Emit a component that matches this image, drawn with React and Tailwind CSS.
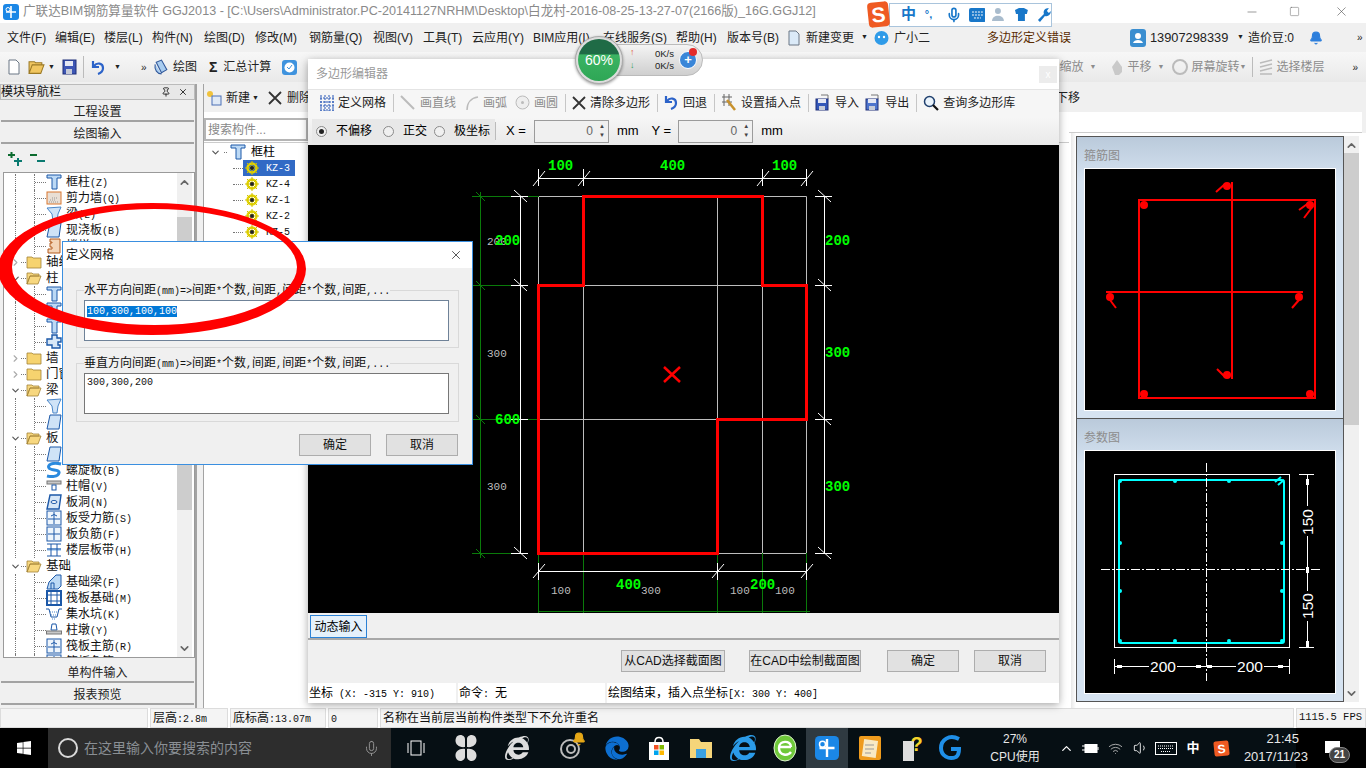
import {
  Bell,
  ChevronDown,
  ChevronRight,
  ChevronUp,
  Mic,
  Minus,
  Pin,
  Square,
  Volume1,
  Wifi,
  X,
} from "lucide-react";
import { FaEdge, FaInternetExplorer, FaWindows } from "react-icons/fa";

const MONO = "font-['Liberation_Mono',monospace]";

// ascii runs in the old SimSun style: half width, mono
function Sim({ t }) {
  return (
    <span className="whitespace-pre">
      {t.split(/([\x00-\x7f]+)/).map((part, i) =>
        /[\x00-\x7f]/.test(part) ? (
          <span key={i} className={`${MONO} text-[10px]`}>
            {part}
          </span>
        ) : (
          <span key={i}>{part}</span>
        )
      )}
    </span>
  );
}

/* ---------- icons ---------- */
const AppGlyph = ({ size = 16 }) => (
  <svg width={size} height={size} viewBox="0 0 16 16">
    <rect width="16" height="16" rx="3" fill="#1b87e6" />
    <path d="M8 2v12M3 8h10" stroke="#fff" strokeWidth="1.6" />
    <circle cx="5" cy="5.5" r="2" fill="none" stroke="#fff" />
  </svg>
);
const Column = () => (
  <svg width="16" height="16" viewBox="0 0 16 16">
    <path d="M1 1h14v3h-4v11H6V4H1z" fill="#bcd9f5" stroke="#1c58a8" />
  </svg>
);
const Wall = () => (
  <svg width="16" height="16" viewBox="0 0 16 16">
    <rect x="1" y="2" width="14" height="12" fill="#e9dfd5" stroke="#d9772e" />
    <path d="M3 12h9M4 10h6M6 8h5" stroke="#999" strokeDasharray="1 1" />
  </svg>
);
const Beam = () => (
  <svg width="16" height="16" viewBox="0 0 16 16">
    <path d="M1 2l14-1-3 7-1 7H7L6 8z" fill="#cfe3f7" stroke="#4a86c8" />
  </svg>
);
const Slab = () => (
  <svg width="16" height="16" viewBox="0 0 16 16">
    <path d="M4 1h11l-2 14H1z" fill="#cfe3f7" stroke="#1c58a8" />
  </svg>
);
const Ladder = () => (
  <svg width="16" height="16" viewBox="0 0 16 16">
    <path d="M4 1h10v14H2v-4h4V9H4V5h2V4H4z" fill="#f4d5b8" stroke="#b35a1c" />
  </svg>
);
const Cross = () => (
  <svg width="16" height="16" viewBox="0 0 16 16">
    <path d="M6 1h5v3h4v4h-3v3h2v3h-8v-3H1V5h5z" fill="#d7e7f7" stroke="#1c58a8" strokeWidth="1.4" />
  </svg>
);
const Spiral = () => (
  <svg width="16" height="16" viewBox="0 0 16 16">
    <path d="M15 2C6 0 1 3 3 6s11 1 10 5-8 4-12 3" fill="none" stroke="#2b8ade" strokeWidth="3" />
  </svg>
);
const Cap = () => (
  <svg width="16" height="16" viewBox="0 0 16 16">
    <rect x="1" y="3" width="14" height="3" fill="#c8c8c8" stroke="#777" />
    <rect x="6" y="7" width="4" height="5" fill="#fff" stroke="#1c58a8" />
  </svg>
);
const Hole = () => (
  <svg width="16" height="16" viewBox="0 0 16 16">
    <path d="M4 1h11l-2 14H1z" fill="#d7e7f7" stroke="#1c58a8" strokeWidth="1.4" />
    <ellipse cx="8" cy="8" rx="3" ry="1.5" fill="#fff" stroke="#1c58a8" />
  </svg>
);
const GridBox = ({ curve }) => (
  <svg width="16" height="16" viewBox="0 0 16 16">
    <rect x="1" y="1" width="14" height="14" fill="#eef5fc" stroke="#1c58a8" />
    <path d={curve ? "M8 2v12M2 9h12M5 6q3-3 6 0" : "M8 2v12M2 8h12"} fill="none" stroke="#1c58a8" />
  </svg>
);
const Strip = () => (
  <svg width="16" height="16" viewBox="0 0 16 16">
    <rect x="1" y="6" width="14" height="3" fill="#bcd9f5" />
    <path d="M1 2h14M1 14h14M5 2v12M11 2v12M1 7h14" stroke="#1c58a8" fill="none" />
  </svg>
);
const Foundation = () => (
  <svg width="16" height="16" viewBox="0 0 16 16">
    <path d="M1 15l2-7 7-7h5v11l-3 3zM5 15V9h3v6" fill="#bcd9f5" stroke="#1c58a8" />
  </svg>
);
const Raft = () => (
  <svg width="16" height="16" viewBox="0 0 16 16">
    <rect x="1" y="1" width="14" height="14" fill="none" stroke="#1c58a8" strokeWidth="2" />
    <path d="M1 5h14M1 11h14M5 1v14M11 1v14" stroke="#1c58a8" />
  </svg>
);
const Pit = () => (
  <svg width="16" height="16" viewBox="0 0 16 16">
    <path d="M0 3h3l2 8h6l2-8h3" fill="none" stroke="#1c58a8" />
    <path d="M4 6h8M5 9h6M6 13h4" stroke="#4a86c8" strokeDasharray="1 1" />
  </svg>
);
const Pier = () => (
  <svg width="16" height="16" viewBox="0 0 16 16">
    <path d="M6 2h4l1 6H5z" fill="#fff" stroke="#1c58a8" />
    <rect x="0.5" y="9" width="15" height="3" fill="#c8c8c8" stroke="#777" />
  </svg>
);
const Folder = ({ open }) => (
  <svg width="16" height="14" viewBox="0 0 16 14">
    {open ? (
      <path d="M1 2h5l1 1h6v2H4L1 13zM4 5h11l-3 8H1z" fill="#f7d77f" stroke="#a38437" strokeWidth="0.8" />
    ) : (
      <path d="M1 2h5l1 1h8v10H1z" fill="#f6d36f" stroke="#a38437" strokeWidth="0.8" />
    )}
  </svg>
);
const Rebar = () => (
  <svg width="14" height="14" viewBox="0 0 14 14">
    <circle cx="7" cy="7" r="4.5" fill="none" stroke="#e3d400" strokeWidth="2.4" />
    <path d="M7 0v14M0 7h14M2 2l10 10M12 2L2 12" stroke="#cfc000" strokeWidth="1" />
    <circle cx="7" cy="7" r="2" fill="#222" />
  </svg>
);
const DocIcon = ({ fill = "#fff" }) => (
  <svg width="14" height="16" viewBox="0 0 14 16">
    <path d="M2 1h7l3 3v11H2z" fill={fill} stroke="#6b7785" />
  </svg>
);
const FloppyIcon = () => (
  <svg width="15" height="16" viewBox="0 0 15 16">
    <rect x="1" y="1" width="13" height="14" fill="#3d56b5" stroke="#1f2f78" />
    <rect x="3" y="2" width="8" height="5" fill="#e4e7f3" />
    <rect x="4" y="10" width="6" height="5" fill="#c6cbd8" />
  </svg>
);
const OpenIcon = () => (
  <svg width="17" height="16" viewBox="0 0 16 14">
    <path d="M1 2h5l1 1h6v2H4L1 13zM4 5h11l-3 8H1z" fill="#f1c660" stroke="#9c7a26" />
  </svg>
);
const UndoIcon = () => (
  <svg width="15" height="15" viewBox="0 0 15 15">
    <path d="M2 1v6h6M3 6c3-4 9-3 9 2 0 3-2 5-5 6" fill="none" stroke="#2c63c9" strokeWidth="2.2" />
  </svg>
);
const BigX = ({ size = 14 }) => (
  <svg width={size} height={size} viewBox="0 0 14 14">
    <path d="M1 1l12 12M13 1L1 13" stroke="#333" strokeWidth="1.8" />
  </svg>
);
const MeshIcon = () => (
  <svg width="14" height="16" viewBox="0 0 14 16">
    <path d="M0 3h14M0 7h14M0 11h14M0 15h14M1 0v16M5 0v16M9 0v16M13 0v16" stroke="#2554b5" strokeDasharray="2 1" />
  </svg>
);
const DiskArrow = ({ up }) => (
  <svg width="16" height="17" viewBox="0 0 16 17">
    <path d="M6 1h7v4" fill="none" stroke="#777" />
    <rect x="1" y="5" width="12" height="11" fill={up ? "#3357b8" : "#4d74cc"} stroke="#1f2f78" />
    <rect x="3" y="5" width="8" height="4" fill="#e4e7f3" />
    <rect x="4" y="12" width="6" height="4" fill="#c6cbd8" />
  </svg>
);
const Lens = () => (
  <svg width="16" height="16" viewBox="0 0 16 16">
    <circle cx="6.5" cy="6.5" r="5" fill="#eaf3fb" stroke="#20406e" strokeWidth="1.5" />
    <path d="M10 10l5 5" stroke="#111" strokeWidth="2.2" />
  </svg>
);

/* ---------- top chrome ---------- */
const menus = [
  ["文件(F)", "w-[48px]"],
  ["编辑(E)", "w-[49px]"],
  ["楼层(L)", "w-[48px]"],
  ["构件(N)", "w-[52px]"],
  ["绘图(D)", "w-[51px]"],
  ["修改(M)", "w-[54px]"],
  ["钢筋量(Q)", "w-[64px]"],
  ["视图(V)", "w-[50px]"],
  ["工具(T)", "w-[49px]"],
  ["云应用(Y)", "w-[61px]"],
  ["BIM应用(I)", "w-[70px]"],
  ["在线服务(S)", "w-[73px]"],
  ["帮助(H)", "w-[51px]"],
  ["版本号(B)", "w-[60px]"],
];

function TitleBar() {
  return (
    <div className="h-[23px] bg-white flex items-center text-[12.6px] text-[#8a8a8a] whitespace-nowrap">
      <div className="w-[23px] pl-[3px] flex items-center">
        <AppGlyph />
      </div>
      <span className="w-[1222px]">
        广联达BIM钢筋算量软件 GGJ2013 - [C:\Users\Administrator.PC-20141127NRHM\Desktop\白龙村-2016-08-25-13-27-07(2166版)_16G.GGJ12]
      </span>
      <Minus size={14} strokeWidth={1} className="text-[#555]" />
      <Square size={11} strokeWidth={1} className="ml-[30px] text-[#555]" />
      <X size={15} strokeWidth={1} className="ml-[34px] text-[#555]" />
    </div>
  );
}

function MenuBar() {
  return (
    <div className="h-[29px] bg-[#f0f0f0] flex items-center pl-[7px] text-[12px] text-[#222] whitespace-nowrap">
      {menus.map(([label, w]) => (
        <span key={label} className={w}>
          {label}
        </span>
      ))}
      <span className="w-[87px] flex items-center gap-[5px]">
        <DocIcon fill="#dbeaf8" />
        新建变更
        <span className="text-[7px] ml-[2px]">▼</span>
      </span>
      <span className="w-[113px] flex items-center gap-[5px]">
        <svg width="15" height="16" viewBox="0 0 15 16">
          <circle cx="7.5" cy="8" r="7" fill="#2f9be8" />
          <circle cx="5" cy="7" r="1.2" fill="#fff" />
          <circle cx="10" cy="7" r="1.2" fill="#fff" />
        </svg>
        广小二
      </span>
      <span className="w-[143px] text-[#5b2c00]">多边形定义错误</span>
      <span className="w-[20px] flex">
        <svg width="16" height="18" viewBox="0 0 16 18">
          <rect width="16" height="18" rx="3" fill="#3a8ed0" />
          <circle cx="8" cy="7" r="3" fill="#fff" />
          <path d="M3 14c1-4 9-4 10 0z" fill="#fff" />
        </svg>
      </span>
      <span className="w-[87px] text-[12.8px]">13907298339</span>
      <span className="w-[11px] text-[7px]">▼</span>
      <span className="w-[61px]">造价豆:0</span>
      <Bell size={14} fill="#2d7fdc" className="text-[#2d7fdc]" />
      <span className="ml-[34px] text-[10px]">»</span>
    </div>
  );
}

function ToolBar() {
  return (
    <div className="h-[30px] bg-[linear-gradient(#f7f7f7,#e9e9e9)] flex items-center pl-[7px] text-[12px] text-[#222] whitespace-nowrap">
      <DocIcon />
      <span className="ml-[7px] flex items-center">
        <OpenIcon />
      </span>
      <span className="text-[7px] ml-[3px]">▼</span>
      <span className="ml-[7px] flex">
        <FloppyIcon />
      </span>
      <span className="w-px h-[22px] bg-[#bbb] ml-[6px]" />
      <span className="ml-[7px] flex">
        <UndoIcon />
      </span>
      <span className="text-[7px] ml-[8px]">▼</span>
      <span className="ml-[20px] w-[12px] text-[10px]">»</span>
      <span className="w-[56px] flex items-center gap-[3px]">
        <svg width="17" height="17" viewBox="0 0 16 16">
          <path d="M3 3l5 10 5-3-5-9zM2 5c-1 5 2 9 6 9" fill="#a9cdf0" stroke="#30579a" />
        </svg>
        绘图
      </span>
      <span className="w-[72px] flex items-center gap-[6px] font-bold text-[14px]">
        Σ<span className="font-normal text-[12px]">汇总计算</span>
      </span>
      <svg width="17" height="17" viewBox="0 0 17 17">
        <rect x="1" y="1" width="15" height="15" rx="3" fill="#3f93de" />
        <circle cx="8.5" cy="8.5" r="5" fill="#fff" />
        <path d="M6 8l2 2 3-4" stroke="#3f93de" fill="none" />
      </svg>
      <div className="ml-auto flex items-center text-[#8c8c8c] pr-[8px]">
        <span>缩放</span>
        <span className="text-[7px] ml-[6px] mr-[12px]">▼</span>
        <svg width="15" height="18" viewBox="0 0 15 18">
          <path d="M3 9l5-7 5 7v5l-3 3H6z" fill="#c9c9c9" />
        </svg>
        <span className="ml-[4px]">平移</span>
        <span className="text-[7px] ml-[6px] mr-[8px]">▼</span>
        <svg width="16" height="18" viewBox="0 0 16 18">
          <circle cx="8" cy="9" r="7" fill="none" stroke="#bbb" strokeWidth="2" />
        </svg>
        <span className="ml-[3px]">屏幕旋转</span>
        <span className="text-[7px] mr-[6px]">▼</span>
        <span className="w-px h-[20px] bg-[#bbb] mr-[6px]" />
        <svg width="14" height="16" viewBox="0 0 14 16">
          <path d="M1 4l12-3M1 8l12-3M1 12l12-3M1 15h12" stroke="#bbb" strokeWidth="1.5" />
        </svg>
        <span className="ml-[3px]">选择楼层</span>
        <span className="ml-[28px] text-[10px] text-[#222]">»</span>
      </div>
    </div>
  );
}

/* ---------- left navigation ---------- */
const treeRows = [
  ["框柱(Z)", Column],
  ["剪力墙(Q)", Wall],
  ["梁(L)", Beam],
  ["现浇板(B)", Slab],
  ["楼梯(L)", Ladder],
  { folder: "轴线" },
  { folder: "柱", open: true },
  ["框柱(Z)", Column],
  ["暗柱(Z)", Column],
  ["端柱(Z)", Column],
  ["构造柱(Z)", Cross],
  { folder: "墙" },
  { folder: "门窗洞" },
  { folder: "梁", open: true },
  ["梁(L)", Beam],
  ["连梁(G)", Slab],
  { folder: "板", open: true },
  ["现浇板(B)", Slab],
  ["螺旋板(B)", Spiral],
  ["柱帽(V)", Cap],
  ["板洞(N)", Hole],
  ["板受力筋(S)", () => <GridBox curve />],
  ["板负筋(F)", () => <GridBox />],
  ["楼层板带(H)", Strip],
  { folder: "基础", open: true },
  ["基础梁(F)", Foundation],
  ["筏板基础(M)", Raft],
  ["集水坑(K)", Pit],
  ["柱墩(Y)", Pier],
  ["筏板主筋(R)", () => <GridBox curve />],
  ["筏板负筋(X)", () => <GridBox />],
];

function TreeRow({ row }) {
  if (row.folder) {
    return (
      <div className="h-4 flex items-center text-[12.5px] text-[#111] whitespace-nowrap">
        <span className="w-[6px]" />
        {row.open ? (
          <ChevronDown size={11} strokeWidth={2.5} className="text-[#555]" />
        ) : (
          <ChevronRight size={11} strokeWidth={2.5} className="text-[#aaa]" />
        )}
        <span className="w-[5px] border-t border-dotted border-[#777]" />
        <Folder open={row.open} />
        <span className="ml-[4px]">{row.folder}</span>
      </div>
    );
  }
  const [label, Icon] = row;
  return (
    <div className="h-4 flex items-center text-[12px] text-[#111] whitespace-nowrap">
      <span className="w-[11px]" />
      <span className="w-[19px] h-full border-l border-dotted border-[#777]" />
      <span className="w-[12px] h-full border-l border-dotted border-[#777] flex items-center">
        <span className="w-full border-t border-dotted border-[#777]" />
      </span>
      <span className="flex">
        <Icon />
      </span>
      <span className="ml-[4px]">
        <Sim t={label} />
      </span>
    </div>
  );
}

const NavBtn = ({ label, className }) => (
  <div
    className={`mx-px flex items-center justify-center pt-[3px] text-[12px] text-[#222] bg-[#f0f0f0] border-b-2 border-[#a3a3a3] ${className}`}
  >
    {label}
  </div>
);

function LeftNav() {
  return (
    <div className="w-[197px] shrink-0 flex flex-col bg-[#f0f0f0] border-r-2 border-[#a3a3a3]">
      <div className="h-[16px] flex items-center justify-between pr-[6px] bg-[#e8e8e8] border border-[#bbb] text-[12px] text-[#111]">
        模块导航栏
        <span className="flex items-center gap-[7px]">
          <Pin size={10} />
          <X size={10} />
        </span>
      </div>
      <NavBtn label="工程设置" className="h-[22px]" />
      <NavBtn label="绘图输入" className="h-[22px]" />
      <div className="h-[28px] pl-[7px] flex items-center gap-[7px]">
        <svg width="16" height="15" viewBox="0 0 16 15">
          <path d="M1 4h7M4.500 1v6" stroke="#0c6b2f" strokeWidth="2" />
          <path d="M7 10h8M11 7v8" stroke="#0a7a70" strokeWidth="2" />
        </svg>
        <svg width="16" height="15" viewBox="0 0 16 15">
          <path d="M0 4h7" stroke="#0c6b2f" strokeWidth="2" />
          <path d="M7 10h8" stroke="#0a7a70" strokeWidth="2" />
        </svg>
      </div>
      <div className="ml-[3px] h-[486px] border border-[#9a9a9a] bg-white flex overflow-hidden">
        <div className="flex-1 pt-px overflow-hidden">
          {treeRows.map((row, i) => (
            <TreeRow key={i} row={row} />
          ))}
        </div>
        <div className="w-[15px] mr-[2px] flex flex-col items-center bg-[#f0f0f0]">
          <ChevronUp size={13} strokeWidth={3} className="mt-[3px] mb-[28px] text-[#666]" />
          <div className="w-full h-[293px] bg-[#cdcdcd]" />
          <ChevronDown size={13} strokeWidth={3} className="mt-auto mb-[2px] text-[#666]" />
        </div>
      </div>
      <div className="h-[3px]" />
      <NavBtn label="单构件输入" className="h-[22px]" />
      <NavBtn label="报表预览" className="h-[22px]" />
    </div>
  );
}

/* ---------- middle / right ---------- */
function MiddleColumn() {
  const kz = ["KZ-3", "KZ-4", "KZ-1", "KZ-2", "KZ-5"];
  return (
    <div className="flex-1 flex flex-col min-w-0 border-l border-[#a3a3a3]">
      <div className="h-[28px] shrink-0 flex items-center pl-[2px] bg-[#f0f0f0] text-[12px] text-[#222] whitespace-nowrap">
        <svg width="16" height="16" viewBox="0 0 16 16">
          <circle cx="4" cy="4" r="3" fill="#f0c23c" />
          <rect x="6" y="6" width="9" height="9" fill="#dfe9f6" stroke="#4a6fb5" />
        </svg>
        <span className="ml-[4px]">新建</span>
        <span className="text-[7px] ml-[2px] mr-[9px]">▼</span>
        <BigX />
        <span className="ml-[5px]">删除</span>
        <span className="ml-auto mr-[286px]">下移</span>
      </div>
      <div className="flex-1 flex min-h-0">
        <div className="w-[865px] flex flex-col bg-white">
          <div className="h-[30px] shrink-0 pt-[6px] pb-px">
            <div className="w-[104px] h-full border-2 border-[#b5b5b5] pl-[2px] flex items-center text-[12px] text-[#888]">
              搜索构件...
            </div>
          </div>
          <div className="flex-1 border-t border-[#ccc] pt-px text-[12px]">
            <div className="h-4 flex items-center pl-[6px] gap-[3px]">
              <ChevronDown size={11} strokeWidth={2.5} className="text-[#555]" />
              <span className="w-[3px] border-t border-dotted border-[#777]" />
              <Column />
              <span className="ml-[2px]">框柱</span>
            </div>
            {kz.map((k, i) => (
              <div key={k} className="h-4 flex items-center pl-[29px] whitespace-nowrap">
                <span className="w-[10px] border-t border-dotted border-[#777]" />
                <span className={`h-4 w-[52px] flex items-center gap-[7px] pl-[2px] ${i === 0 ? "bg-[#316ac5] text-white" : "text-[#111]"}`}>
                  <Rebar />
                  <span className={`${MONO} text-[10px]`}>{k}</span>
                </span>
              </div>
            ))}
          </div>
        </div>
        <div className="flex-1 flex flex-col">
          <div className="h-[21px] shrink-0 bg-white border-b border-[#ccc] mr-[4px]" />
          <div className="flex-1 flex bg-[linear-gradient(90deg,#fff,#fff_2px,#e8e8e8_2px,#fff_7px)] pl-[7px] pt-[3px] pb-[6px]">
            <div className="w-[268px] flex flex-col border border-[#555]">
              <DrawPanel title="箍筋图" className="h-[282px] border-b border-[#555]">
                <StirrupDrawing />
              </DrawPanel>
              <DrawPanel title="参数图" className="h-[282px]">
                <ParamDrawing />
              </DrawPanel>
            </div>
            <div className="w-[15px] bg-[#f0f0f0] flex flex-col items-center">
              <ChevronUp size={13} strokeWidth={3} className="mt-[3px] mb-[1px] text-[#666]" />
              <div className="w-full h-[272px] bg-[#cdcdcd]" />
              <ChevronDown size={13} strokeWidth={3} className="mt-auto mb-[2px] text-[#666]" />
            </div>
            <div className="w-[7px] bg-white" />
          </div>
        </div>
      </div>
    </div>
  );
}

const DrawPanel = ({ title, className, children }) => (
  <div className={`flex flex-col px-[7px] pb-[7px] bg-[linear-gradient(#bacadb,#d6e3f1_16%,#d6e3f1)] ${className}`}>
    <div className="h-[31px] shrink-0 flex items-center pt-[6px] text-[12px] text-[#8d8d8d]">{title}</div>
    <div className="flex-1 border border-white bg-black overflow-hidden">{children}</div>
  </div>
);

function StirrupDrawing() {
  const dots = [[59,36],[225,36],[59,225],[225,225],[25,128],[214,128],[142,17],[142,206]];
  return (
    <svg width="252" height="242" viewBox="0 0 252 242" fill="none" stroke="#f00" strokeWidth="2">
      <rect x="54" y="31" width="176" height="198" />
      <path d="M147 13v197M21 123h197" />
      <path d="M140 15l-9 8M140 208l-8-8M25 131l6 8M214 131l-7 8M225 33l-11 8M228 37l-9 12" />
      {dots.map(([x, y]) => (
        <circle key={`${x}-${y}`} cx={x} cy={y} r="4" fill="#f00" stroke="none" />
      ))}
    </svg>
  );
}

function ParamDrawing() {
  const bumps = [[90,30],[144,30],[90,190],[144,190],[35,92],[35,140],[197,92],[197,140],[35,30],[35,190],[197,190]];
  const textCls = "font-['Liberation_Sans',sans-serif] text-[15.5px]";
  return (
    <svg width="252" height="242" viewBox="0 0 252 242" fill="none" stroke="#fff">
      <rect x="29.500" y="23.500" width="175" height="173" />
      <rect x="34" y="29" width="165" height="163" rx="2" stroke="#0ff" strokeWidth="2" />
      <path d="M121.500 12v218M16 118.500h219" strokeDasharray="9 2 2 2" />
      <path d="M193 34l6-5M190 31l6-5" stroke="#0ff" strokeWidth="2" />
      {bumps.map(([x, y]) => (
        <circle key={`${x}-${y}`} cx={x} cy={y} r="2" fill="#0ff" stroke="none" />
      ))}
      <path d="M222.500 24v173M214 23.500h15M214 196.500h15M29.500 208v15M204.500 208v15M29 215.500h175" />
      <path d="M222.500 34v-6M222.500 122v-6M222.500 196v-6M37 215.500h-5M116 215.500h-5M127 215.500h-5M198 215.500h-5" strokeWidth="3" />
      <rect x="215" y="55" width="15" height="30" fill="#000" stroke="none" />
      <rect x="215" y="140" width="15" height="30" fill="#000" stroke="none" />
      <rect x="64" y="208" width="28" height="15" fill="#000" stroke="none" />
      <rect x="151" y="208" width="28" height="15" fill="#000" stroke="none" />
      <g fill="#fff" stroke="none" className={textCls} textAnchor="middle">
        <text x="78" y="221">200</text>
        <text x="165" y="221">200</text>
        <text transform="translate(228 71) rotate(-90)">150</text>
        <text transform="translate(228 155) rotate(-90)">150</text>
      </g>
    </svg>
  );
}

function CanvasDrawing() {
  const gridX = [230.5, 275.5, 409.5, 454.5, 498.5];
  const gridY = [51.5, 140.5, 274.5, 408.5];
  const greens = [
    [240, 25, "100"], [352, 25, "400"], [464, 25, "100"],
    [187, 100, "200"], [187, 279, "600"],
    [517, 100, "200"], [517, 212, "300"], [517, 346, "300"],
    [308, 444, "400"], [442, 444, "200"],
  ];
  const grays = [
    [179, 100, "200"], [179, 212, "300"], [179, 345, "300"],
    [243, 449, "100"], [333, 449, "300"], [422, 449, "100"], [467, 449, "100"],
  ];
  return (
    <svg width="751" height="468" viewBox="0 0 751 468" fill="none">
      {gridX.map((x) => (
        <path key={x} d={`M${x} 51.500V408.500`} stroke="#bdbdbd" />
      ))}
      {gridY.map((y) => (
        <path key={y} d={`M230.500 ${y}H498.500`} stroke="#bdbdbd" />
      ))}
      {/* green dimension lines */}
      <g stroke="#0a7a0a">
        <path d="M172.500 47v366M164 51.500h67M165 140.500h38M165 274.500h66M164 408.500h41" />
        <path d="M168 47l9 9M168 136l9 9M168 270l9 9M168 404l9 9" />
        <path d="M230.500 408v60M275.500 408v60M409.500 408v60M454.500 408v60M498.500 408v60M230 466.500h272" />
      </g>
      {/* white dimension lines */}
      <g stroke="#fff">
        <path d="M230.500 33.500h268M230.500 24v17M275.500 24v17M454.500 24v17M498.500 24v17" />
        <path d="M225 41l12-15M270 41l12-15M449 41l12-15M493 41l12-15" />
        <path d="M212.500 51v358M203 51.500h17M203 140.500h17M203 274.500h17M203 408.500h17" />
        <path d="M206 45l13 12M206 134l13 12M206 402l13 12" />
        <path d="M516.500 51v358M507 51.500h17M507 140.500h17M507 274.500h17M507 408.500h17" />
        <path d="M510 45l13 12M510 134l13 12M510 268l13 12M510 402l13 12" />
        <path d="M230.500 426.500h268M230.500 418v17M409.500 418v17M498.500 418v17" />
        <path d="M225 433l12-14M404 433l12-14M493 433l12-14" />
      </g>
      <path d="M275.500 51.500H454.500V140.500H498.500V274.500H409.500V408.500H230.500V140.500H275.500Z" stroke="#f00" strokeWidth="3" />
      <path d="M356 222l16 15M372 222l-16 15" stroke="#f00" strokeWidth="2.500" />
      <g className={`${MONO} text-[11px]`} fill="#bdbdbd">
        {grays.map(([x, y, t]) => (
          <text key={`${x}-${y}`} x={x} y={y}>{t}</text>
        ))}
      </g>
      <g className={`${MONO} text-[14px] font-bold`} fill="#0f0">
        {greens.map(([x, y, t]) => (
          <text key={`${x}-${y}`} x={x} y={y}>{t}</text>
        ))}
      </g>
    </svg>
  );
}

/* ---------- floating windows ---------- */
const EdTool = ({ icon, label, className, muted }) => (
  <span className={`flex items-center gap-[4px] ${muted ? "text-[#8c8c8c]" : "text-[#222]"} ${className}`}>
    {icon}
    {label}
  </span>
);
const Sep = () => <span className="w-px h-[18px] bg-[#c6c6c6] ml-[1px] mr-[6px]" />;

const Radio = ({ on, className }) => (
  <span className={`w-[11px] h-[11px] rounded-full border border-[#8a8a8a] bg-[#f0f0f0] flex items-center justify-center ${className}`}>
    {on && <span className="w-[5px] h-[5px] rounded-full bg-[#222]" />}
  </span>
);

const SpinBox = () => (
  <span className="w-[75px] h-[23px] border border-[#9b9b9b] bg-[#f0f0f0] flex items-center justify-end pr-[3px] text-[#666]">
    0
    <span className="ml-[6px] flex flex-col text-[6px] leading-[9px] text-[#444]">
      <span>▲</span>
      <span>▼</span>
    </span>
  </span>
);

const WinBtn = ({ label, className }) => (
  <span className={`h-[22px] bg-[#e1e1e1] border border-[#adadad] flex items-center justify-center text-[12px] text-[#111] ${className}`}>
    {label}
  </span>
);

function PolygonEditor() {
  return (
    <div className="absolute left-[308px] top-[59px] w-[751px] h-[644px] flex flex-col bg-[#f0f0f0] shadow-[0_2px_8px_rgba(0,0,0,0.35)] text-[12px] whitespace-nowrap">
      <div className="h-[30px] bg-white flex items-center justify-between pl-[8px] pr-[2px] text-[#999]">
        多边形编辑器
        <span className="w-[18px] h-[17px] bg-[#ececec] text-white text-[10px] flex items-center justify-center">x</span>
      </div>
      <div className="h-[28px] bg-[#f6f6f6] border-t border-[#e4e4e4] flex items-center pl-[12px] pb-[2px]">
        <EdTool icon={<MeshIcon />} label="定义网格" className="mr-[6px]" />
        <Sep />
        <EdTool
          muted
          icon={
            <svg width="16" height="16" viewBox="0 0 16 16">
              <path d="M1 1l13 13" stroke="#bbb" strokeWidth="2" />
            </svg>
          }
          label="画直线"
          className="mr-[9px]"
        />
        <EdTool
          muted
          icon={
            <svg width="14" height="16" viewBox="0 0 14 16">
              <path d="M2 15C2 8 6 3 13 2" stroke="#bbb" strokeWidth="1.5" fill="none" />
            </svg>
          }
          label="画弧"
          className="mr-[8px]"
        />
        <EdTool
          muted
          icon={
            <svg width="15" height="15" viewBox="0 0 15 15">
              <circle cx="7.500" cy="7.500" r="6.500" fill="#eee" stroke="#bbb" />
              <circle cx="7.500" cy="7.500" r="1.500" fill="#bbb" />
            </svg>
          }
          label="画圆"
          className="mr-[6px]"
        />
        <Sep />
        <EdTool icon={<BigX />} label="清除多边形" className="mr-[6px]" />
        <Sep />
        <EdTool icon={<UndoIcon />} label="回退" className="mr-[6px]" />
        <Sep />
        <EdTool
          icon={
            <svg width="16" height="17" viewBox="0 0 16 17">
              <path d="M1 3h10M1 8h10M3 0v12M8 0v12" stroke="#666" />
              <path d="M6 6l8 10" stroke="#c8912c" strokeWidth="2.500" />
            </svg>
          }
          label="设置插入点"
          className="mr-[6px]"
        />
        <Sep />
        <EdTool icon={<DiskArrow up />} label="导入" className="mr-[6px]" />
        <EdTool icon={<DiskArrow />} label="导出" className="mr-[6px]" />
        <Sep />
        <EdTool icon={<Lens />} label="查询多边形库" />
      </div>
      <div className="h-[28px] bg-[linear-gradient(#f6f6f6,#e9e9e9)] flex items-center">
        <div className="w-[183px] ml-[4px] h-[24px] bg-[#e8e8e8] flex items-center pl-[4px]">
          <Radio on />
          <span className="ml-[9px]">不偏移</span>
          <Radio className="ml-[11px]" />
          <span className="ml-[9px]">正交</span>
          <Radio className="ml-[7px]" />
          <span className="ml-[9px]">极坐标</span>
        </div>
        <span className="w-px h-[18px] bg-[#bbb] mr-[2px]" />
        <span className="ml-[8px] mr-[8px] text-[13px] font-['Liberation_Sans',sans-serif]">X =</span>
        <SpinBox />
        <span className="ml-[8px] mr-[13px] text-[13px] font-['Liberation_Sans',sans-serif]">mm</span>
        <span className="mr-[7px] text-[13px] font-['Liberation_Sans',sans-serif]">Y =</span>
        <SpinBox />
        <span className="ml-[8px] text-[13px] font-['Liberation_Sans',sans-serif]">mm</span>
      </div>
      <div className="h-[468px] bg-black overflow-hidden">
        <CanvasDrawing />
      </div>
      <div className="h-[27px] border-b-2 border-[#a8a8a8] flex items-start pt-[2px] pl-[2px]">
        <span className="w-[57px] h-[23px] border border-[#2b82d6] bg-[#e5f1fb] flex items-center justify-center">动态输入</span>
      </div>
      <div className="h-[43px] flex items-center pb-[2px]">
        <WinBtn label="从CAD选择截面图" className="ml-[313px] w-[104px]" />
        <WinBtn label="在CAD中绘制截面图" className="ml-[24px] w-[112px]" />
        <WinBtn label="确定" className="ml-[26px] w-[72px]" />
        <WinBtn label="取消" className="ml-[15px] w-[72px]" />
      </div>
      <div className="h-[20px] flex gap-[2px]">
        <span className="w-[148px] bg-white pl-[1px] flex items-center"><Sim t="坐标 (X: -315 Y: 910)" /></span>
        <span className="w-[147px] bg-white pl-[1px] flex items-center"><Sim t="命令: 无" /></span>
        <span className="flex-1 bg-white pl-[1px] flex items-center"><Sim t="绘图结束，插入点坐标[X: 300 Y: 400]" /></span>
      </div>
    </div>
  );
}

function GridDialog() {
  return (
    <div className="absolute left-[62px] top-[241px] w-[411px] h-[224px] border border-[#3a8fe0] bg-[#f0f0f0] text-[12px] text-[#111] whitespace-nowrap">
      <div className="h-[26px] bg-white flex items-center justify-between pl-[3px] pr-[9px]">
        定义网格
        <X size={14} strokeWidth={1.2} />
      </div>
      <fieldset className="mt-[14px] ml-[13px] w-[383px] border border-[#d9d9d9] pl-[7px] pb-[6px]">
        <legend className="h-[16px] leading-[16px]">
          <Sim t="水平方向间距(mm)=>间距*个数,间距,间距*个数,间距,..." />
        </legend>
        <div className="w-[365px] h-[41px] mt-[2px] border border-[#6f8298] bg-white pl-[2px] pt-[2px] leading-[14px]">
          <span className={`${MONO} text-[10px] bg-[#0078d7] text-white`}>100,300,100,100</span>
        </div>
      </fieldset>
      <fieldset className="mt-[7px] ml-[13px] w-[383px] border border-[#d9d9d9] pl-[7px] pb-[7px]">
        <legend className="h-[16px] leading-[16px]">
          <Sim t="垂直方向间距(mm)=>间距*个数,间距,间距*个数,间距,..." />
        </legend>
        <div className={`w-[365px] h-[41px] mt-[2px] border border-[#777] bg-white pl-[2px] pt-[2px] leading-[14px] ${MONO} text-[10px]`}>
          300,300,200
        </div>
      </fieldset>
      <div className="mt-[12px] flex">
        <WinBtn label="确定" className="ml-[236px] w-[72px]" />
        <WinBtn label="取消" className="ml-[15px] w-[72px]" />
      </div>
    </div>
  );
}

function NetWidget() {
  return (
    <div className="absolute left-[575px] top-[36px] w-[128px] h-[48px]">
      <div className="absolute left-[20px] top-[8px] w-[108px] h-[32px] rounded-r-full bg-[linear-gradient(#f4f4f4,#cfcfcf)] border border-[#bbb] text-[9.5px] text-[#222]">
        <div className="h-1/2 flex items-center pl-[59px] pt-[3px] font-['Liberation_Sans',sans-serif]">0K/s</div>
        <div className="h-1/2 flex items-center pl-[59px] pb-[3px] font-['Liberation_Sans',sans-serif]">0K/s</div>
        <span className="absolute left-[34px] top-[1px] text-[9px] text-[#e0633c]">↑</span>
        <span className="absolute left-[34px] top-[14px] text-[9px] text-[#2f9e55]">↓</span>
        <span className="absolute left-[83px] top-[6px] w-[18px] h-[18px] rounded-full bg-[#3a86d8] border border-white text-white text-[13px] leading-[15px] text-center font-bold">+</span>
        <span className="absolute left-[93px] top-[3px] w-[8px] h-[8px] rounded-full bg-[#e22b2b]" />
      </div>
      <div className="absolute left-0 top-0 w-[48px] h-[48px] rounded-full bg-[#ddd] border border-[#aaa] flex items-center justify-center shadow-[0_1px_3px_rgba(0,0,0,0.4)]">
        <div className="w-[42px] h-[42px] rounded-full bg-[linear-gradient(#1f6b46_0%,#1f6b46_35%,#3bb463_38%,#2ea655_100%)] flex items-center justify-center text-white text-[14px] font-['Liberation_Sans',sans-serif]">
          60%
        </div>
      </div>
    </div>
  );
}

function ImeBar() {
  return (
    <div className="absolute left-[868px] top-[2px] flex items-center">
      <div className="w-[21px] h-[25px] bg-[#ef5a22] rounded-[4px] -rotate-6 flex items-center justify-center text-white text-[21px] font-bold font-['Liberation_Sans',sans-serif] z-10">
        S
      </div>
      <div className="w-[163px] h-[24px] bg-white border border-[#a9c4dc] flex items-center pl-[11px] gap-[7px] text-[#1877c9]">
        <span className="text-[15px] font-bold w-[16px]">中</span>
        <span className="text-[11px] font-bold w-[14px] ml-[1px]">°,</span>
        <Mic size={16} strokeWidth={2.5} />
        <svg width="17" height="14" viewBox="0 0 17 14">
          <rect width="17" height="14" rx="2" fill="#1877c9" />
          <path d="M3 4h11M3 7h11M5 10h7" stroke="#fff" strokeDasharray="2 1" />
        </svg>
        <svg width="15" height="16" viewBox="0 0 15 16">
          <circle cx="6" cy="4" r="3" fill="#a9bccd" />
          <path d="M0 14c0-7 12-7 12 0z" fill="#a9bccd" />
        </svg>
        <svg width="15" height="15" viewBox="0 0 15 15">
          <path d="M1 3l4-2h5l4 2-1 4h-2v7H4V7H2z" fill="#1877c9" />
        </svg>
        <svg width="15" height="15" viewBox="0 0 15 15">
          <path d="M2 13l6-6c-1-3 1-6 5-6l-2 3 2 2 2-2c0 4-3 6-6 5l-5 6z" fill="#1877c9" />
        </svg>
      </div>
    </div>
  );
}

function RedEllipse() {
  return (
    <svg className="absolute left-0 top-[195px] pointer-events-none" width="320" height="150" viewBox="0 0 320 150">
      <path
        fillRule="evenodd"
        fill="#f00"
        d="M-2 74a154 66 0 1 0 308 0a154 66 0 1 0 -308 0ZM12 72a142.500 58 0 1 0 285 0a142.500 58 0 1 0 -285 0Z"
      />
    </svg>
  );
}

/* ---------- bottom ---------- */
function StatusBar() {
  const cell = "bg-[#f4f4f4] border border-[#dcdcdc] flex items-center pl-[2px]";
  return (
    <div className="h-[20px] flex gap-[2px] bg-white text-[12px] text-[#111] whitespace-nowrap">
      <span className={`${cell} w-[148px]`} />
      <span className={`${cell} w-[78px]`}><Sim t="层高:2.8m" /></span>
      <span className={`${cell} w-[96px]`}><Sim t="底标高:13.07m" /></span>
      <span className={`${cell} w-[50px]`}><Sim t="0" /></span>
      <span className={`${cell} w-[914px]`}>名称在当前层当前构件类型下不允许重名</span>
      <span className={`${cell} flex-1 pl-[1px] ${MONO} text-[10.5px]`}>1115.5 FPS</span>
    </div>
  );
}

const taskIcons = [
  ["w-[50px]", <svg key="t" width="18" height="16" viewBox="0 0 18 16" fill="none" stroke="#fff"><rect x="4" y="1" width="10" height="14" /><path d="M1 3v10M17 3v10" /></svg>],
  ["w-[50px]", <svg key="f" width="26" height="28" viewBox="0 0 26 28" fill="#ddd"><path d="M12 13C5 14 1 9 3 4s9-3 9 1zM14 13c7 1 11-4 9-9s-9-3-9 1zM12 15c-7-1-11 4-9 9s9 3 9-1zM14 15c7-1 11 4 9 9s-9 3-9-1z" /></svg>],
  ["w-[52px]", <FaInternetExplorer key="e" size={24} className="text-[#ddd]" />],
  ["w-[53px]", <span key="s" className="relative flex"><svg width="24" height="26" viewBox="0 0 24 26" fill="none" stroke="#bbb" strokeWidth="2"><circle cx="12" cy="14" r="9" /><circle cx="13" cy="14" r="4" /></svg><Bell size={14} fill="#e6a817" className="absolute -top-[3px] left-[14px] text-[#e6a817]" /></span>],
  ["w-[42px]", <FaEdge key="ed" size={24} className="text-[#0d6fd1]" />],
  ["w-[42px]", <svg key="st" width="24" height="26" viewBox="0 0 24 26"><path d="M2 7h20v18H2z" fill="#fff" /><path d="M8 7c0-6 8-6 8 0" fill="none" stroke="#fff" strokeWidth="1.5" /><rect x="7" y="10" width="4.500" height="4.500" fill="#f25022" /><rect x="12.500" y="10" width="4.500" height="4.500" fill="#7fba00" /><rect x="7" y="15.500" width="4.500" height="4.500" fill="#00a4ef" /><rect x="12.500" y="15.500" width="4.500" height="4.500" fill="#ffb900" /></svg>],
  ["w-[42px]", <svg key="fo" width="24" height="24" viewBox="0 0 24 24"><path d="M1 3h9l2 3h11v16H1z" fill="#f5d57a" /><rect x="7" y="13" width="10" height="9" fill="#3aa0e0" /></svg>],
  ["w-[42px]", <FaInternetExplorer key="ie" size={26} className="text-[#2b9be8]" />],
  ["w-[42px]", <svg key="g" width="24" height="28" viewBox="0 0 24 28"><ellipse cx="12" cy="14" rx="11" ry="13" fill="#6fc83a" stroke="#dff3d0" /><path d="M6 13h12M18 13c0-7-12-7-12 1s9 8 12 4" fill="none" stroke="#fff" strokeWidth="2.400" /></svg>],
  ["w-[42px] bg-[#2f3a41]", <AppGlyph key="a" size={24} />],
  ["w-[44px]", <svg key="y" width="24" height="26" viewBox="0 0 24 26"><rect x="1" y="1" width="22" height="24" rx="2" fill="#ef9b1d" /><rect x="5" y="5" width="14" height="17" fill="#f8e9c5" transform="rotate(8 12 13)" /><path d="M7 10h9M7 14h9M7 18h6" stroke="#999" /></svg>],
  ["w-[32px]", <span key="h" className="relative flex"><span className="w-[11px] h-[20px] mt-[6px] bg-[#ddd]" /><span className="absolute left-[8px] -top-[2px] text-[#f5d32a] text-[20px] font-bold leading-[22px] font-['Liberation_Sans',sans-serif]">?</span></span>],
  ["w-[52px]", <svg key="gg" width="24" height="28" viewBox="0 0 24 28" fill="none" stroke="#1f8fe8" strokeWidth="4"><path d="M21 5C11 0 3 6 3 14s8 12 15 9c3-2 3-6 3-8h-8" /></svg>],
];

function TaskBar() {
  return (
    <div className="h-[40px] bg-[#060f14] flex items-stretch text-white whitespace-nowrap">
      <div className="w-[48px] bg-black flex items-center justify-center">
        <FaWindows size={16} />
      </div>
      <div className="w-[343px] bg-[#2d2d2d] flex items-center pl-[10px] text-[14px] text-[#8a8f94]">
        <span className="w-[20px] h-[20px] rounded-full border-[2.5px] border-[#d9d9d9] mr-[6px]" />
        在这里输入你要搜索的内容
        <Mic size={17} strokeWidth={1.3} className="ml-auto mr-[11px] text-[#999]" />
      </div>
      {taskIcons.map(([w, node], i) => (
        <div key={i} className={`${w} flex items-center justify-center`}>
          {node}
        </div>
      ))}
      <div className="w-[78px] flex flex-col items-center justify-center text-[12px] leading-[18px] text-[#e8e8e8]">
        <span>27%</span>
        <span>CPU使用</span>
      </div>
      <div className="w-[24px] flex items-center justify-center">
        <ChevronUp size={15} />
      </div>
      <div className="w-[25px] flex items-center justify-center">
        <svg width="17" height="11" viewBox="0 0 17 11">
          <rect x="3" y="1.500" width="12" height="8" fill="#fff" stroke="#fff" />
          <path d="M0 3h3M0 7h3M16 4v3" stroke="#fff" />
        </svg>
      </div>
      <div className="w-[25px] flex items-center justify-center">
        <Wifi size={15} strokeWidth={1.4} className="text-[#bbb]" />
      </div>
      <div className="w-[25px] flex items-center justify-center">
        <Volume1 size={16} strokeWidth={1.3} />
      </div>
      <div className="w-[26px] flex items-center justify-center">
        <svg width="22" height="13" viewBox="0 0 22 13" fill="none" stroke="#fff">
          <rect x="0.500" y="0.500" width="21" height="12" />
          <path d="M3 4h16M3 6.500h16M6 9.500h10" strokeDasharray="1 1" />
        </svg>
      </div>
      <div className="w-[28px] flex items-center justify-center text-[13px] font-bold">中</div>
      <div className="w-[28px] flex items-center justify-center">
        <span className="w-[15px] h-[15px] bg-[#ef5a22] rounded-[2px] -rotate-6 flex items-center justify-center text-[12px] font-bold font-['Liberation_Sans',sans-serif]">S</span>
      </div>
      <div className="w-[80px] flex flex-col items-end justify-center text-[13px] leading-[18px] text-[#e8e8e8] bg-[linear-gradient(90deg,#060f14_76%,#000_76%)] font-['Liberation_Sans',sans-serif] pr-[7px]">
        <span className="pr-[9px]">21:45</span>
        <span>2017/11/23</span>
      </div>
      <div className="flex-1 bg-black relative flex items-start pt-[13px] pl-[10px]">
        <span className="w-[15px] h-[12px] bg-white" />
        <span className="absolute left-[14px] top-[19px] w-[21px] h-[16px] rounded-full bg-[#444] border border-[#888] text-[10px] font-bold text-center leading-[14px] font-['Liberation_Sans',sans-serif]">
          21
        </span>
      </div>
    </div>
  );
}

export default function App() {
  return (
    <div className="relative w-[1366px] h-[768px] overflow-hidden flex flex-col bg-[#f0f0f0] font-['Liberation_Sans','Noto_Sans_CJK_SC',sans-serif]">
      <TitleBar />
      <MenuBar />
      <ToolBar />
      <div className="h-[626px] flex pt-[2px] gap-[6px]">
        <LeftNav />
        <MiddleColumn />
      </div>
      <StatusBar />
      <TaskBar />
      <PolygonEditor />
      <GridDialog />
      <RedEllipse />
      <NetWidget />
      <ImeBar />
    </div>
  );
}
